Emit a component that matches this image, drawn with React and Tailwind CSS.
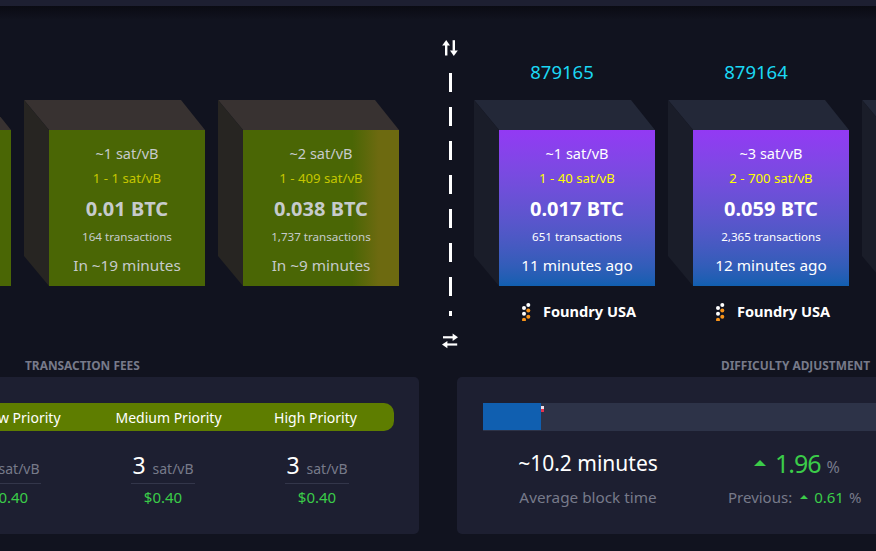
import React from "react";

const pending = [
  { fee: "~1 sat/vB", range: "1 - 1 sat/vB", btc: "0.01 BTC", txs: "164 transactions", time: "In ~26 minutes" },
  { fee: "~1 sat/vB", range: "1 - 1 sat/vB", btc: "0.01 BTC", txs: "164 transactions", time: "In ~19 minutes" },
  { fee: "~2 sat/vB", range: "1 - 409 sat/vB", btc: "0.038 BTC", txs: "1,737 transactions", time: "In ~9 minutes", warm: true },
];

const mined = [
  { height: "879165", fee: "~1 sat/vB", range: "1 - 40 sat/vB", btc: "0.017 BTC", txs: "651 transactions", time: "11 minutes ago" },
  { height: "879164", fee: "~3 sat/vB", range: "2 - 700 sat/vB", btc: "0.059 BTC", txs: "2,365 transactions", time: "12 minutes ago" },
  { height: "879163", fee: "~2 sat/vB", range: "1 - 300 sat/vB", btc: "0.031 BTC", txs: "1,204 transactions", time: "20 minutes ago" },
];

function FoundryLogo() {
  return (
    <svg width="10" height="18" viewBox="0 0 10 18">
      <circle cx="7.3" cy="2" r="2" fill="#fff" />
      <circle cx="3" cy="5" r="2" fill="#fff" />
      <circle cx="7.3" cy="7.6" r="2" fill="#f7931a" />
      <circle cx="3" cy="10.7" r="2" fill="#fff" />
      <circle cx="7.3" cy="13.7" r="2" fill="#f7931a" />
      <circle cx="3" cy="16.7" r="2" fill="#f7931a" />
    </svg>
  );
}

function Cube({ block, kind }) {
  const isMined = kind === "mined";
  let face = "bg-[#4a6605] text-[#c6cbcc]";
  if (isMined) face = "bg-gradient-to-b from-[#9339f4] to-[#105fb0] text-white";
  if (block.warm) face = "bg-[linear-gradient(to_right,#4a6605_0%,#4a6605_70%,#6d6a10_87%,#6d6a10_100%)] text-[#c6cbcc]";

  return (
    <div className="relative w-[181px] h-[186px] shrink-0 pl-[25px] pt-[30px]">
      <svg className="absolute left-0 top-0" width="181" height="186" viewBox="0 0 181 186">
        <polygon points="0,0 157,0 181,30 25,30" fill={isMined ? "#232838" : "#383231"} />
        <polygon points="0,0 25,30 25,186 0,156" fill={isMined ? "#1a1d29" : "#272522"} />
      </svg>
      <div className={`relative w-[156px] h-[156px] flex flex-col items-center pt-[13px] ${face}`}>
        <div className="h-[21px] text-[14.5px] leading-[21px]">{block.fee}</div>
        <div className={`h-[29px] text-[13.2px] leading-[28px] ${isMined ? "text-[#ffff00]" : "text-[#c5c600]"}`}>{block.range}</div>
        <div className="h-[31px] text-[20px] leading-[31px] font-bold">{block.btc}</div>
        <div className="h-[26px] text-[11.6px] leading-[26px]">{block.txs}</div>
        <div className="h-[30px] text-[15.3px] leading-[30px]">{block.time}</div>
      </div>
    </div>
  );
}

function FlipArrows() {
  return (
    <svg width="16" height="16" viewBox="0 0 16 16" fill="#fff">
      <path d="M3 15.5V5h2.4v10.5z" />
      <path d="M4.2 0 8 5.4H.2z" />
      <path d="M10.6 .2V10.8H13V.2z" />
      <path d="M11.8 16 8 10.6h7.8z" />
    </svg>
  );
}

function SwapArrows() {
  return (
    <svg width="16" height="16" viewBox="0 0 16 16" fill="#fff">
      <path d="M1 3.2h10v2.2H1z" />
      <path d="M16 4.3 10.6 .6v7.4z" />
      <path d="M5 10.4h10.2v2.2H5z" />
      <path d="M0 11.5 5.4 7.9v7.4z" />
    </svg>
  );
}

function Fee({ label, usd }) {
  return (
    <div className="w-[154px] shrink-0 flex flex-col items-center">
      <div className="flex items-baseline gap-[7px] border-b border-[#33364a] h-[34px] px-[1px]">
        <span className="text-[23px] leading-[31px] text-white">3</span>
        <span className="text-[14px] text-[#777a8a]">{label}</span>
      </div>
      <div className="text-[15px] leading-[27px] text-[#3bcc49]">{usd}</div>
    </div>
  );
}

export default function App() {
  return (
    <div className="relative w-[876px] h-[551px] overflow-hidden bg-[#11131f] font-['Noto_Sans','Open_Sans',sans-serif]">
      <div className="h-[6px] bg-[#1d1f31]" />
      <div className="absolute left-0 right-0 top-[6px] h-[14px] bg-gradient-to-b from-[#0a0b13] to-[#11131f]" />

      <section className="relative flex items-start w-max ml-[-170px] pt-[34px]">
        <div className="flex gap-[13px] pt-[60px]">
          {pending.map((b, i) => (
            <Cube key={i} block={b} kind="pending" />
          ))}
        </div>

        <div className="ml-[43px] w-[16px] flex flex-col items-center">
          <FlipArrows />
          <div className="my-[17px] ml-[1px] w-[3px] h-[243px] bg-[repeating-linear-gradient(to_bottom,#fff_0,#fff_19px,transparent_19px,transparent_34px)]" />
          <SwapArrows />
        </div>

        <div className="ml-[16px] flex gap-[13px]">
          {mined.map((b) => (
            <div key={b.height} className="w-[181px] shrink-0 flex flex-col">
              <div className="h-[60px] pr-[5px] text-center text-[18.5px] leading-[64px] text-[#1bd8f4]">{b.height}</div>
              <Cube block={b} kind="mined" />
              <div className="mt-[16px] ml-[28px] flex items-center justify-center gap-[12px] h-[20px] text-[14.6px] font-bold text-white">
                <FoundryLogo />
                <span>Foundry USA</span>
              </div>
            </div>
          ))}
        </div>
      </section>

      <section className="flex mt-[7px] ml-[-80px] w-max">
        <div className="w-[499px]">
          <h2 className="ml-[105px] h-[16px] mb-[5px] pt-[1px] text-[11.9px] leading-[16px] font-bold text-[#777a8a]">TRANSACTION FEES</h2>
          <div className="h-[157px] rounded-[5px] bg-[#1d1f31] px-[25px] pt-[26px]">
            <div className="h-[28px] flex items-center pl-[3px] pr-[5px] rounded-r-[10px] bg-[#5e7d00] text-[14px] text-white">
              <div className="w-[147px] text-center">Low Priority</div>
              <div className="w-[147px] text-center">Medium Priority</div>
              <div className="w-[147px] text-center">High Priority</div>
            </div>
            <div className="flex justify-end mt-[19px]">
              <Fee label="sat/vB" usd="$0.40" />
              <Fee label="sat/vB" usd="$0.40" />
              <Fee label="sat/vB" usd="$0.40" />
            </div>
          </div>
        </div>

        <div className="ml-[38px] w-[500px]">
          <h2 className="ml-[264px] h-[16px] mb-[5px] pt-[1px] text-[11.9px] leading-[16px] font-bold text-[#777a8a] whitespace-nowrap">DIFFICULTY ADJUSTMENT</h2>
          <div className="h-[157px] rounded-[5px] bg-[#1d1f31] px-[26px] pt-[26px]">
            <div className="relative h-[28px] bg-[#2d3348]">
              <div className="w-[58px] h-[27px] bg-[#105fb0]" />
              <div className="absolute left-[58px] top-[3px] w-[3px] h-[3px] bg-[#f0dce4]" />
              <div className="absolute left-[58px] top-[6px] w-[3px] h-[3px] bg-[#e6324b]" />
            </div>
            <div className="flex mt-[13px]">
              <div className="w-[210px] text-center">
                <div className="text-[21px] leading-[38px] text-white">~10.2 minutes</div>
                <div className="text-[15.3px] leading-[30px] text-[#777a8a]">Average block time</div>
              </div>
              <div className="w-[230px] flex flex-col items-start pl-[35px]">
                <div className="flex items-center h-[38px] pl-[26px]">
                  <span className="mr-[9px] w-0 h-0 border-x-[6px] border-x-transparent border-b-[6px] border-b-[#3bcc49]" />
                  <span className="text-[25px] tracking-[-1px] leading-[38px] text-[#3bcc49]">1.96</span>
                  <span className="ml-[6px] mt-[8px] text-[16px] leading-[20px] text-[#777a8a]">%</span>
                </div>
                <div className="flex items-center h-[30px] text-[15px] text-[#777a8a] whitespace-nowrap">
                  <span>Previous:</span>
                  <span className="ml-[8px] mr-[6px] w-0 h-0 border-x-[4px] border-x-transparent border-b-[4px] border-b-[#3bcc49]" />
                  <span className="text-[#3bcc49]">0.61</span>
                  <span className="ml-[5px]">%</span>
                </div>
              </div>
            </div>
          </div>
        </div>
      </section>
    </div>
  );
}
